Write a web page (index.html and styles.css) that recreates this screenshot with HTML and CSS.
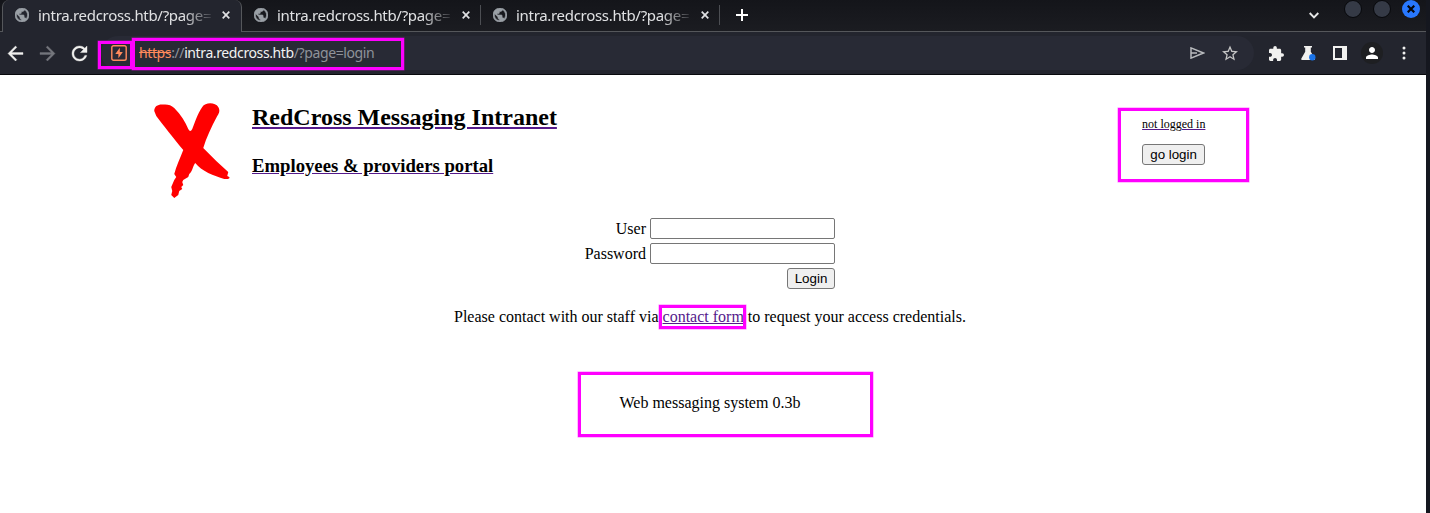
FILE: index.html
```html
<!DOCTYPE html>
<html lang="en">
<head>
<meta charset="utf-8">
<title>RedCross Messaging Intranet</title>
<link rel="stylesheet" href="styles.css">
</head>
<body>
<svg width="0" height="0" class="defs">
  <symbol id="globe" viewBox="2 2 20 20"><path stroke-width=".9" d="M12 2C6.48 2 2 6.48 2 12s4.48 10 10 10 10-4.48 10-10S17.52 2 12 2zm-1 17.93c-3.95-.49-7-3.85-7-7.93 0-.62.08-1.21.21-1.79L9 15v1c0 1.1.9 2 2 2v1.93zm6.9-2.54c-.26-.81-1-1.39-1.9-1.39h-1v-3c0-.55-.45-1-1-1H8v-2h2c.55 0 1-.45 1-1V7h2c1.1 0 2-.9 2-2v-.41c2.93 1.19 5 4.06 5 7.41 0 2.08-.8 3.97-2.1 5.39z"/></symbol>
  <symbol id="close" viewBox="0 0 8 8"><path d="M.7.7l6.6 6.6M7.3.7L.7 7.3" fill="none" stroke="currentColor" stroke-width="1.7"/></symbol>
</svg>
<div class="window">
  <header class="tabs">
    <div class="tab active"><svg class="globe"><use href="#globe"/></svg><span class="title">intra.redcross.htb/?page=</span><svg class="close"><use href="#close"/></svg></div>
    <div class="tab"><svg class="globe"><use href="#globe"/></svg><span class="title">intra.redcross.htb/?page=</span><svg class="close"><use href="#close"/></svg></div>
    <div class="tab"><svg class="globe"><use href="#globe"/></svg><span class="title">intra.redcross.htb/?page=</span><svg class="close"><use href="#close"/></svg></div>
    <svg class="plus" viewBox="0 0 12 12"><path d="M6 0v12M0 6h12" stroke="#fff" stroke-width="2"/></svg>
    <div class="controls">
      <svg class="chevron" viewBox="0 0 10 7"><path d="M.7 1L5 5.3 9.3 1" fill="none" stroke="#e8e8e8" stroke-width="1.9"/></svg>
      <span class="dot"></span><span class="dot"></span>
      <span class="dot blue"><svg viewBox="0 0 8 8"><path d="M.7.7l6.600 6.600M7.300.7L.7 7.300" stroke="#05070c" stroke-width="2.200"/></svg></span>
    </div>
  </header>
  <nav class="toolbar">
    <div class="navs">
      <svg viewBox="4 4 16 16" fill="#f1f1ef" stroke="#f1f1ef" stroke-width=".4"><path d="M20 11H7.83l5.59-5.59L12 4l-8 8 8 8 1.410-1.410L7.830 13H20v-2z"/></svg>
      <svg viewBox="4 4 16 16" fill="#75777d" stroke="#75777d" stroke-width=".4"><path d="M12 4l-1.410 1.410L16.170 11H4v2h12.170l-5.580 5.590L12 20l8-8z"/></svg>
      <svg viewBox="4 4 16 16" fill="#f1f1ef" stroke="#f1f1ef" stroke-width=".4"><path d="M17.650 6.350C16.200 4.900 14.210 4 12 4c-4.420 0-7.990 3.580-7.990 8s3.570 8 7.990 8c3.730 0 6.840-2.550 7.730-6h-2.080c-.82 2.330-3.040 4-5.650 4-3.310 0-6-2.690-6-6s2.690-6 6-6c1.660 0 3.140.69 4.220 1.780L13 11h7V4l-2.350 2.350z"/></svg>
    </div>
    <div class="omnibox">
      <svg class="burp" viewBox="0 0 16 16"><rect x=".8" y=".8" width="14.400" height="14.400" rx="1.800" fill="none" stroke="#ff8a5c" stroke-width="1.400"/><path d="M8.800 2.800V6.900H11.800L7.400 13.200V9H4.300Z" fill="#ff8a5c"/></svg>
      <span class="url"><s>https</s>://<b>intra.redcross.htb</b>/?page=login</span>
      <svg class="send" viewBox="0 0 15 12"><path d="M1 .9L13.400 6 1 11.100V.9zM1 6h6" fill="none" stroke="#b9bbbe" stroke-width="1.500"/></svg>
      <svg class="star" viewBox="2 2 20 19"><path fill="#c6c6c6" d="M22 9.240l-7.190-.62L12 2 9.190 8.630 2 9.240l5.460 4.730L5.820 21 12 17.270 18.180 21l-1.630-7.030L22 9.240zM12 15.400l-3.760 2.270 1-4.280-3.320-2.880 4.380-.38L12 6.100l1.710 4.040 4.380.38-3.320 2.880 1 4.280L12 15.400z"/></svg>
    </div>
    <div class="actions">
      <svg class="puzzle" viewBox="2 1 21 21"><path d="M20.500 11H19V7c0-1.100-.9-2-2-2h-4V3.500a2.500 2.500 0 0 0-5 0V5H4c-1.100 0-1.990.9-1.990 2v3.800H3.500c1.490 0 2.700 1.210 2.700 2.700s-1.210 2.700-2.700 2.700H2V20c0 1.100.9 2 2 2h3.800v-1.500c0-1.490 1.210-2.700 2.700-2.700s2.700 1.210 2.700 2.700V22H17c1.100 0 2-.9 2-2v-4h1.500a2.500 2.500 0 0 0 0-5z"/></svg>
      <svg class="flask" viewBox="0 0 15 15"><path d="M3 0h8v1.600H9.800v4.200l4 6.500Q14.500 14 12.800 14H1.200Q-.4 14 .5 12.300L4.200 5.800V1.600H3z"/><circle cx="11.300" cy="11.300" r="3.200" fill="#1a73e8"/></svg>
      <svg class="panel" viewBox="0 0 14 14"><path fill-rule="evenodd" d="M0 0h14v14H0zM2 2v10h7V2z"/></svg>
      <span class="avatar"><svg viewBox="4 4 16 16"><path d="M12 12c2.210 0 4-1.790 4-4s-1.790-4-4-4-4 1.790-4 4 1.790 4 4 4zm0 2c-2.670 0-8 1.340-8 4v2h16v-2c0-2.660-5.330-4-8-4z"/></svg></span>
      <svg class="more" viewBox="0 0 4 14"><circle cx="2" cy="2" r="1.500"/><circle cx="2" cy="7" r="1.500"/><circle cx="2" cy="12" r="1.500"/></svg>
    </div>
  </nav>
  <main class="page">
    <section class="banner">
      <svg class="logo" viewBox="0 0 75.500 95"><path fill="#f00" d="M0 8C0 3 4 1 9 1.500C13 1 17 2 20 5C27 12 31 19 34 26Q36 30 38 26C41 19 43 11 48 4C51-1 61-1 64 4C66 7 65 10 63 13C57 24 52 35 49 45L62 58L74 69L73 73L75 74C76 76 73 76 70 76C60 73 47 68 41 60C39 62 38 69 35 71L34 74L29 77L28 79L29 82L27 84L28 86L25 88L24 92L20 95L17 92L18 88L17 84L20 77L22 74L20 71C22 63 26 55 29 47C19 35 8 21 2 13Z"/></svg>
      <div class="heads"><h2>RedCross Messaging Intranet</h2><h3>Employees &amp; providers portal</h3></div>
      <div class="session"><span>not logged in</span><button>go login</button></div>
    </section>
    <form class="login">
      <label for="user">User</label><input id="user" type="text">
      <label for="pass">Password</label><input id="pass" type="password">
      <button type="button">Login</button>
    </form>
    <p class="contact">Please contact with our staff via <a href="#">contact form</a> to request your access credentials.</p>
    <p class="version">Web messaging system 0.3b</p>
  </main>
</div>
<i class="mark m-shield"></i><i class="mark m-url"></i><i class="mark m-session"></i><i class="mark m-contact"></i><i class="mark m-version"></i>
</body>
</html>
```
FILE: styles.css
```css
* { box-sizing: border-box; }
body { margin: 0; height: 513px; overflow: hidden; position: relative; background: #15171f; font-family: "Liberation Serif", serif; font-size: 16px; color: #000; }
svg { display: block; flex: none; }
.defs { position: absolute; }
.window { width: 1426px; height: 513px; background: #fff; }
.tabs { height: 32px; display: flex; background: linear-gradient(#14151a, #1b1c21); border-bottom: 1px solid #55575b; padding-left: 2px; }
.tab { width: 239px; height: 31px; display: flex; align-items: center; padding: 0 11px 1px 12px; color: #e0e1e3; position: relative; }
.tab + .tab::after { content: ""; position: absolute; right: 0; top: 5px; width: 1px; height: 20px; background: #4c4e53; }
.tab.active { width: 240px; height: 32px; padding: 0 11px 2px 12px; background: #23252e; border: solid #55575b; border-width: 0 1px; border-radius: 7px 7px 0 0; }
.globe { width: 14px; height: 14px; fill: #9aa0a6; stroke: #9aa0a6; }
.title { font: 15px/20px "Noto Sans", sans-serif; letter-spacing: -.31px; width: 176px; margin: 0 auto 0 9px; white-space: nowrap; -webkit-mask-image: linear-gradient(90deg, #000 145px, transparent 178px); mask-image: linear-gradient(90deg, #000 145px, transparent 178px); }
.close { width: 8px; height: 8px; }
.plus { width: 12px; height: 12px; margin: 9px 0 0 16px; }
.controls { display: flex; margin-left: auto; padding-right: 6px; }
.chevron { width: 10px; height: 7px; margin: 12px 25px 0 0; }
.dot { width: 18px; height: 18px; border-radius: 50%; margin-right: 11px; background: #353a46; border: 1px solid #07080b; }
.dot.blue { background: #2878ff; border: 0; margin: 0; display: flex; align-items: center; justify-content: center; }
.dot svg { width: 8px; height: 8px; }
.toolbar { height: 43px; background: #23252e; border-bottom: 1px solid #08090c; display: flex; align-items: center; padding-left: 8px; }
.navs { display: flex; gap: 17px; }
.navs svg { width: 15px; height: 15px; overflow: visible; }
.omnibox { width: 1153px; height: 34px; border-radius: 17px; background: #282a35; margin-left: 14px; display: flex; align-items: center; padding: 0 16px 0 10px; }
.burp { width: 16px; height: 16px; }
.url { font: 14px/20px "Noto Sans", sans-serif; letter-spacing: -.39px; color: #8f929a; margin: 0 auto 0 12px; white-space: nowrap; }
.url b { font-weight: 400; color: #f2f2f2; }
.url s { color: #ff8a5c; }
.send { width: 15px; height: 12px; margin-right: 17px; }
.star { width: 16px; height: 16px; }
.actions { display: flex; align-items: center; margin-left: 15px; fill: #f1f1ef; }
.puzzle { width: 15px; height: 15px; }
.flask { width: 15px; height: 15px; margin-left: 17px; }
.panel { width: 14px; height: 14px; margin-left: 17px; }
.avatar { width: 22px; height: 22px; margin-left: 14px; border-radius: 50%; background: #1e1f22; display: flex; align-items: center; justify-content: center; }
.avatar svg { width: 12px; height: 12px; fill: #fff; }
.more { width: 4px; height: 14px; margin-left: 19px; }
.page { height: 438px; }
.banner { height: 143px; display: flex; padding: 28px 0 0 154px; }
.logo { width: 76px; height: 95px; }
.heads { margin-left: 22px; }
h2, h3 { margin: 0; text-decoration: underline; text-decoration-color: #551a8b; }
h2 { font-size: 24px; line-height: 28px; }
h3 { font-size: 18.72px; line-height: 22px; margin-top: 24px; }
.session { margin: 14px 220.6px 0 auto; display: flex; flex-direction: column; align-items: flex-start; font-size: 12px; line-height: 14px; }
.session span { text-decoration: underline; text-decoration-color: #551a8b; }
button { width: 63px; height: 21px; padding: 0; font: 13.333px "Liberation Sans", sans-serif; color: #000; background: #efefef; border: 1px solid #767676; border-radius: 3px; }
.session button { margin-top: 13px; }
.login { width: 250px; margin-left: 585px; display: grid; grid-template-columns: 61px 185px; gap: 4px; text-align: right; line-height: 21px; }
.login label { white-space: nowrap; direction: rtl; }
.login input { width: 185px; height: 21px; border: 1px solid #767676; border-radius: 2px; background: #fff; padding: 1px 2px; }
.login button { grid-column: 2; justify-self: end; width: 48px; }
p { margin: 0; line-height: 18px; white-space: nowrap; }
.contact { margin: 19px 0 0 454px; }
a { color: #551a8b; }
.version { margin: 68px 0 0 619.5px; }
.mark { position: absolute; border: 3px solid #f0f; box-shadow: 0 0 0 .5px rgba(255, 0, 255, .5); }
.m-shield { left: 98px; top: 41px; width: 35px; height: 28px; }
.m-url { left: 132px; top: 38px; width: 272px; height: 32px; }
.m-session { left: 1118px; top: 108px; width: 131px; height: 74px; }
.m-contact { left: 659px; top: 305px; width: 87px; height: 24px; }
.m-version { left: 578px; top: 372px; width: 295px; height: 65px; }
```
